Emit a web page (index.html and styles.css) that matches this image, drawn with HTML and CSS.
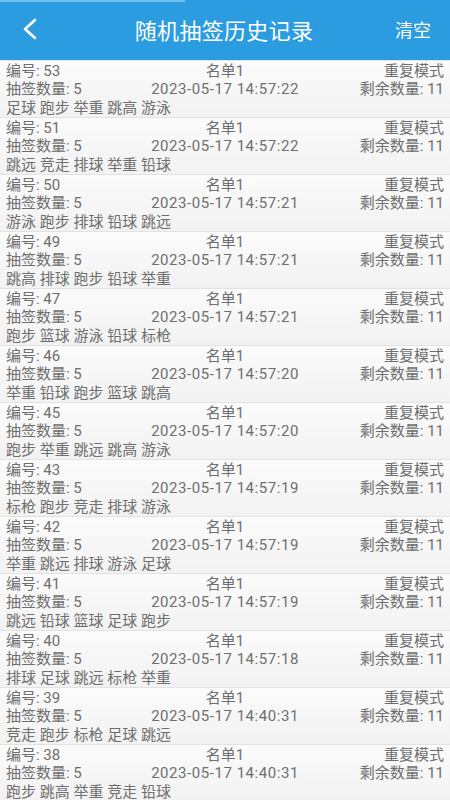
FILE: index.html
```html
<!DOCTYPE html>
<html lang="zh">
<head>
<meta charset="utf-8">
<title>随机抽签历史记录</title>
<link rel="stylesheet" href="styles.css">
</head>
<body>
<header class="bar">
  <div class="status-strip"></div>
  <div class="bar-row">
    <span class="back"><svg width="16" height="22" viewBox="0 0 16 22"><path d="M13 2 L3 11 L13 20" fill="none" stroke="#fff" stroke-width="2.6" stroke-linecap="round" stroke-linejoin="round"/></svg></span>
    <h1 class="title">随机抽签历史记录</h1>
    <span class="clear">清空</span>
  </div>
</header>
<main class="list">
  <div class="item"><div class="line"><span>编号: 53</span><span class="mid">名单1</span><span class="right">重复模式</span></div><div class="line"><span>抽签数量: 5</span><span class="mid date">2023-05-17 14:57:22</span><span class="right">剩余数量: 11</span></div><div class="names">足球 跑步 举重 跳高 游泳</div></div>
  <div class="item"><div class="line"><span>编号: 51</span><span class="mid">名单1</span><span class="right">重复模式</span></div><div class="line"><span>抽签数量: 5</span><span class="mid date">2023-05-17 14:57:22</span><span class="right">剩余数量: 11</span></div><div class="names">跳远 竞走 排球 举重 铅球</div></div>
  <div class="item"><div class="line"><span>编号: 50</span><span class="mid">名单1</span><span class="right">重复模式</span></div><div class="line"><span>抽签数量: 5</span><span class="mid date">2023-05-17 14:57:21</span><span class="right">剩余数量: 11</span></div><div class="names">游泳 跑步 排球 铅球 跳远</div></div>
  <div class="item"><div class="line"><span>编号: 49</span><span class="mid">名单1</span><span class="right">重复模式</span></div><div class="line"><span>抽签数量: 5</span><span class="mid date">2023-05-17 14:57:21</span><span class="right">剩余数量: 11</span></div><div class="names">跳高 排球 跑步 铅球 举重</div></div>
  <div class="item"><div class="line"><span>编号: 47</span><span class="mid">名单1</span><span class="right">重复模式</span></div><div class="line"><span>抽签数量: 5</span><span class="mid date">2023-05-17 14:57:21</span><span class="right">剩余数量: 11</span></div><div class="names">跑步 篮球 游泳 铅球 标枪</div></div>
  <div class="item"><div class="line"><span>编号: 46</span><span class="mid">名单1</span><span class="right">重复模式</span></div><div class="line"><span>抽签数量: 5</span><span class="mid date">2023-05-17 14:57:20</span><span class="right">剩余数量: 11</span></div><div class="names">举重 铅球 跑步 篮球 跳高</div></div>
  <div class="item"><div class="line"><span>编号: 45</span><span class="mid">名单1</span><span class="right">重复模式</span></div><div class="line"><span>抽签数量: 5</span><span class="mid date">2023-05-17 14:57:20</span><span class="right">剩余数量: 11</span></div><div class="names">跑步 举重 跳远 跳高 游泳</div></div>
  <div class="item"><div class="line"><span>编号: 43</span><span class="mid">名单1</span><span class="right">重复模式</span></div><div class="line"><span>抽签数量: 5</span><span class="mid date">2023-05-17 14:57:19</span><span class="right">剩余数量: 11</span></div><div class="names">标枪 跑步 竞走 排球 游泳</div></div>
  <div class="item"><div class="line"><span>编号: 42</span><span class="mid">名单1</span><span class="right">重复模式</span></div><div class="line"><span>抽签数量: 5</span><span class="mid date">2023-05-17 14:57:19</span><span class="right">剩余数量: 11</span></div><div class="names">举重 跳远 排球 游泳 足球</div></div>
  <div class="item"><div class="line"><span>编号: 41</span><span class="mid">名单1</span><span class="right">重复模式</span></div><div class="line"><span>抽签数量: 5</span><span class="mid date">2023-05-17 14:57:19</span><span class="right">剩余数量: 11</span></div><div class="names">跳远 铅球 篮球 足球 跑步</div></div>
  <div class="item"><div class="line"><span>编号: 40</span><span class="mid">名单1</span><span class="right">重复模式</span></div><div class="line"><span>抽签数量: 5</span><span class="mid date">2023-05-17 14:57:18</span><span class="right">剩余数量: 11</span></div><div class="names">排球 足球 跳远 标枪 举重</div></div>
  <div class="item"><div class="line"><span>编号: 39</span><span class="mid">名单1</span><span class="right">重复模式</span></div><div class="line"><span>抽签数量: 5</span><span class="mid date">2023-05-17 14:40:31</span><span class="right">剩余数量: 11</span></div><div class="names">竞走 跑步 标枪 足球 跳远</div></div>
  <div class="item"><div class="line"><span>编号: 38</span><span class="mid">名单1</span><span class="right">重复模式</span></div><div class="line"><span>抽签数量: 5</span><span class="mid date">2023-05-17 14:40:31</span><span class="right">剩余数量: 11</span></div><div class="names">跑步 跳高 举重 竞走 铅球</div></div>
</main>
</body>
</html>
```

FILE: styles.css
```css
* { box-sizing: border-box; }
html, body { margin: 0; padding: 0; }
body {
  width: 450px;
  height: 800px;
  overflow: hidden;
  background: #ffffff;
  font-family: Roboto, "Noto Sans CJK SC", sans-serif;
}
.bar {
  background: #2b9ce0;
  height: 60px;
  display: flex;
  flex-direction: column;
}
.status-strip {
  height: 2px;
  width: 185px;
  background: #6cc0ee;
}
.bar-row {
  flex: 1;
  display: grid;
  grid-template-columns: 1fr auto 1fr;
  align-items: center;
  padding: 0 19px 0 17px;
  color: #fff;
  margin-top: -4px;
}
.back { display: flex; align-items: center; margin-left: 5px; }
.title {
  margin: 0;
  font-size: 22px;
  font-weight: normal;
  letter-spacing: 0.3px;
}
.clear {
  justify-self: end;
  font-size: 18px;
}
.list { display: flex; flex-direction: column; }
.item {
  height: 57px;
  padding: 1px 6px 0 6px;
  background: linear-gradient(#fbfbfb, #f2f2f2);
  border-top: 1px solid #e2e2e2;
  color: #6e6e6e;
  font-size: 15px;
  line-height: 18.3px;
}
.line {
  display: grid;
  grid-template-columns: 1fr auto 1fr;
}
.mid { text-align: center; }
.date { letter-spacing: 0.55px; }
.right { text-align: right; }
.names { white-space: nowrap; }
```
